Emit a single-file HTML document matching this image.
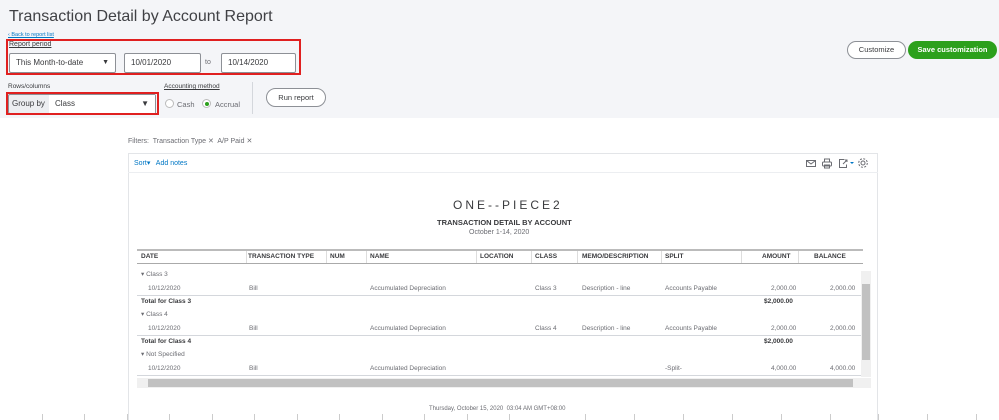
<!DOCTYPE html><html><head><style>
*{margin:0;padding:0;box-sizing:border-box}
body{width:999px;height:420px;overflow:hidden;background:#fff;font-family:"Liberation Sans",sans-serif;position:relative;color:#393a3d}
.a{position:absolute;white-space:nowrap}
.top{position:absolute;left:0;top:0;width:999px;height:118px;background:#f4f5f8}
.inp{position:absolute;background:#fff;border:1px solid #8d9096;border-radius:2px;font-size:8px;padding:0 6px;line-height:18px;height:20px;color:#393a3d}
.red{position:absolute;border:2px solid #e02020}
.h{font-size:6.5px;font-weight:bold;color:#393a3d}
.t{font-size:6.5px;color:#6b6c72}
.line{position:absolute;height:1px;background:#d4d7dc}
.tick{position:absolute;top:414px;width:1px;height:6px;background:#ccc}
</style></head><body>
<div class="top"></div>
<div class="a" style="left:9px;top:8px;font-size:16px;color:#404145">Transaction Detail by Account Report</div>
<div class="a" style="left:8px;top:32px;font-size:5.5px;color:#0077c5;text-decoration:underline">‹ Back to report list</div>
<div class="a" style="left:9px;top:41px;font-size:7px;text-decoration:underline;color:#393a3d">Report period</div>
<div class="inp" style="left:9px;top:53px;width:107px">This Month-to-date<span style="position:absolute;right:6px;font-size:7px">▼</span></div>
<div class="inp" style="left:124px;top:53px;width:77px">10/01/2020</div>
<div class="a" style="left:205px;top:59px;font-size:7px;color:#6b6c72">to</div>
<div class="inp" style="left:221px;top:53px;width:75px">10/14/2020</div>
<div class="red" style="left:6px;top:39px;width:295px;height:36px"></div>
<div class="a" style="left:8px;top:83px;font-size:6.5px">Rows/columns</div>
<div class="inp" style="left:8px;top:94px;width:148px;padding:0;background:#eceef1"><span style="padding-left:3px">Group by</span><span style="position:absolute;left:40px;top:0;bottom:0;right:0;background:#fff;padding-left:6px">Class<span style="position:absolute;right:6px">▼</span></span></div>
<div class="red" style="left:6px;top:92px;width:153px;height:23px"></div>
<div class="a" style="left:164px;top:83px;font-size:6.5px;text-decoration:underline">Accounting method</div>
<div class="a" style="left:165px;top:99px;width:9px;height:9px;border:1px solid #bbb;border-radius:50%;background:#fff"></div>
<div class="a" style="left:177px;top:100px;font-size:7.5px;color:#6b6c72">Cash</div>
<div class="a" style="left:202px;top:99px;width:9px;height:9px;border:1px solid #bbb;border-radius:50%;background:#fff"><div style="margin:1.5px;width:4px;height:4px;border-radius:50%;background:#2ca01c"></div></div>
<div class="a" style="left:215px;top:100px;font-size:7.5px;color:#6b6c72">Accrual</div>
<div class="a" style="left:252px;top:82px;width:1px;height:32px;background:#d4d7dc"></div>
<div class="a" style="left:266px;top:88px;width:60px;height:19px;border:1px solid #8d9096;border-radius:10px;font-size:7.5px;line-height:17px;text-align:center;background:#fff">Run report</div>
<div class="a" style="left:847px;top:41px;width:59px;height:18px;border:1px solid #8d9096;border-radius:10px;font-size:7.5px;line-height:16px;text-align:center;background:#fff">Customize</div>
<div class="a" style="left:908px;top:41px;width:89px;height:18px;border-radius:10px;font-size:7.5px;line-height:18px;text-align:center;background:#2ca01c;color:#fff;font-weight:bold">Save customization</div>
<div class="a" style="left:128px;top:137px;font-size:7px;color:#6b6c72">Filters:&nbsp; Transaction Type ✕&nbsp; A/P Paid ✕</div>
<div class="a" style="left:128px;top:153px;width:750px;height:267px;border:1px solid #e3e5e8;border-bottom:none"></div>
<div class="line" style="left:128px;top:172px;width:750px;background:#eceef1"></div>
<div class="a" style="left:134px;top:159px;font-size:7px;color:#0077c5">Sort▾&nbsp;&nbsp; Add notes</div>
<svg class="a" style="left:805px;top:157px" width="70" height="12" viewBox="0 0 70 12" fill="none" stroke="#6b6c72" stroke-width="1">
<rect x="1.5" y="3.5" width="9" height="6"/><path d="M1.5 3.5l4.5 3.5 4.5-3.5"/>
<rect x="19.5" y="2" width="5" height="3"/><rect x="17.5" y="5" width="9" height="4" rx="1"/><rect x="19.5" y="8" width="5" height="3"/>
<path d="M39.5 2.5h-5v8h7v-3"/><path d="M38 7l4-4M40 3h2v2"/>
<path d="M45 5l2 2 2-2z" fill="#0077c5" stroke="none"/>
<circle cx="58" cy="6" r="2"/><circle cx="58" cy="6" r="4.3" stroke-dasharray="2 1.4"/>
</svg>
<div class="a" style="left:453px;top:198px;font-size:12px;letter-spacing:3px;color:#393a3d">ONE--PIECE2</div>
<div class="a" style="left:437px;top:218px;font-size:7.5px;font-weight:bold">TRANSACTION DETAIL BY ACCOUNT</div>
<div class="a" style="left:469px;top:229px;font-size:7px;color:#6b6c72">October 1-14, 2020</div>
<div class="a" style="left:137px;top:249px;width:726px;height:2px;background:#bbb"></div>
<div class="line" style="left:137px;top:263px;width:726px;background:#aaa"></div>
<div class="h a" style="left:141px;top:253px">DATE</div>
<div class="h a" style="left:248px;top:253px">TRANSACTION TYPE</div>
<div class="h a" style="left:330px;top:253px">NUM</div>
<div class="h a" style="left:370px;top:253px">NAME</div>
<div class="h a" style="left:480px;top:253px">LOCATION</div>
<div class="h a" style="left:535px;top:253px">CLASS</div>
<div class="h a" style="left:582px;top:253px">MEMO/DESCRIPTION</div>
<div class="h a" style="left:665px;top:253px">SPLIT</div>
<div class="h a" style="left:762px;top:253px">AMOUNT</div>
<div class="h a" style="left:814px;top:253px">BALANCE</div>
<div class="a" style="left:246px;top:251px;width:1px;height:12px;background:#ddd"></div>
<div class="a" style="left:326px;top:251px;width:1px;height:12px;background:#ddd"></div>
<div class="a" style="left:366px;top:251px;width:1px;height:12px;background:#ddd"></div>
<div class="a" style="left:476px;top:251px;width:1px;height:12px;background:#ddd"></div>
<div class="a" style="left:531px;top:251px;width:1px;height:12px;background:#ddd"></div>
<div class="a" style="left:577px;top:251px;width:1px;height:12px;background:#ddd"></div>
<div class="a" style="left:661px;top:251px;width:1px;height:12px;background:#ddd"></div>
<div class="a" style="left:741px;top:251px;width:1px;height:12px;background:#ddd"></div>
<div class="a" style="left:798px;top:251px;width:1px;height:12px;background:#ddd"></div>

<div class="t a" style="left:141px;top:270px">▾ Class 3</div>
<div class="t a" style="left:148px;top:285px">10/12/2020</div><div class="t a" style="left:249px;top:285px">Bill</div><div class="t a" style="left:370px;top:285px">Accumulated Depreciation</div><div class="t a" style="left:535px;top:285px">Class 3</div><div class="t a" style="left:582px;top:285px">Description - line</div><div class="t a" style="left:665px;top:285px">Accounts Payable</div><div class="t a" style="left:771px;top:285px">2,000.00</div><div class="t a" style="left:830px;top:285px">2,000.00</div>
<div class="line" style="left:137px;top:295px;width:724px"></div>
<div class="h a" style="left:141px;top:298px">Total for Class 3</div><div class="h a" style="left:764px;top:298px">$2,000.00</div>
<div class="t a" style="left:141px;top:310px">▾ Class 4</div>
<div class="t a" style="left:148px;top:325px">10/12/2020</div><div class="t a" style="left:249px;top:325px">Bill</div><div class="t a" style="left:370px;top:325px">Accumulated Depreciation</div><div class="t a" style="left:535px;top:325px">Class 4</div><div class="t a" style="left:582px;top:325px">Description - line</div><div class="t a" style="left:665px;top:325px">Accounts Payable</div><div class="t a" style="left:771px;top:325px">2,000.00</div><div class="t a" style="left:830px;top:325px">2,000.00</div>
<div class="line" style="left:137px;top:335px;width:724px"></div>
<div class="h a" style="left:141px;top:338px">Total for Class 4</div><div class="h a" style="left:764px;top:338px">$2,000.00</div>
<div class="t a" style="left:141px;top:350px">▾ Not Specified</div>
<div class="t a" style="left:148px;top:365px">10/12/2020</div><div class="t a" style="left:249px;top:365px">Bill</div><div class="t a" style="left:370px;top:365px">Accumulated Depreciation</div><div class="t a" style="left:665px;top:365px">-Split-</div><div class="t a" style="left:771px;top:365px">4,000.00</div><div class="t a" style="left:830px;top:365px">4,000.00</div>
<div class="line" style="left:137px;top:375px;width:724px"></div>
<div class="a" style="left:861px;top:271px;width:10px;height:106px;background:#f0f0f0"></div>
<div class="a" style="left:862px;top:284px;width:8px;height:76px;background:#c1c1c1"></div>
<div class="a" style="left:137px;top:378px;width:734px;height:10px;background:#f0f0f0"></div>
<div class="a" style="left:148px;top:379px;width:705px;height:8px;background:#c1c1c1"></div>
<div class="a" style="left:429px;top:406px;font-size:6px;color:#6b6c72">Thursday, October 15, 2020&nbsp; 03:04 AM GMT+08:00</div>
<div class="tick" style="left:42px"></div><div class="tick" style="left:84px"></div><div class="tick" style="left:127px"></div><div class="tick" style="left:169px"></div><div class="tick" style="left:212px"></div><div class="tick" style="left:254px"></div><div class="tick" style="left:297px"></div><div class="tick" style="left:339px"></div><div class="tick" style="left:382px"></div><div class="tick" style="left:424px"></div><div class="tick" style="left:467px"></div><div class="tick" style="left:509px"></div><div class="tick" style="left:585px"></div><div class="tick" style="left:634px"></div><div class="tick" style="left:683px"></div><div class="tick" style="left:732px"></div><div class="tick" style="left:781px"></div><div class="tick" style="left:830px"></div><div class="tick" style="left:878px"></div><div class="tick" style="left:927px"></div><div class="tick" style="left:976px"></div>
</body></html>
